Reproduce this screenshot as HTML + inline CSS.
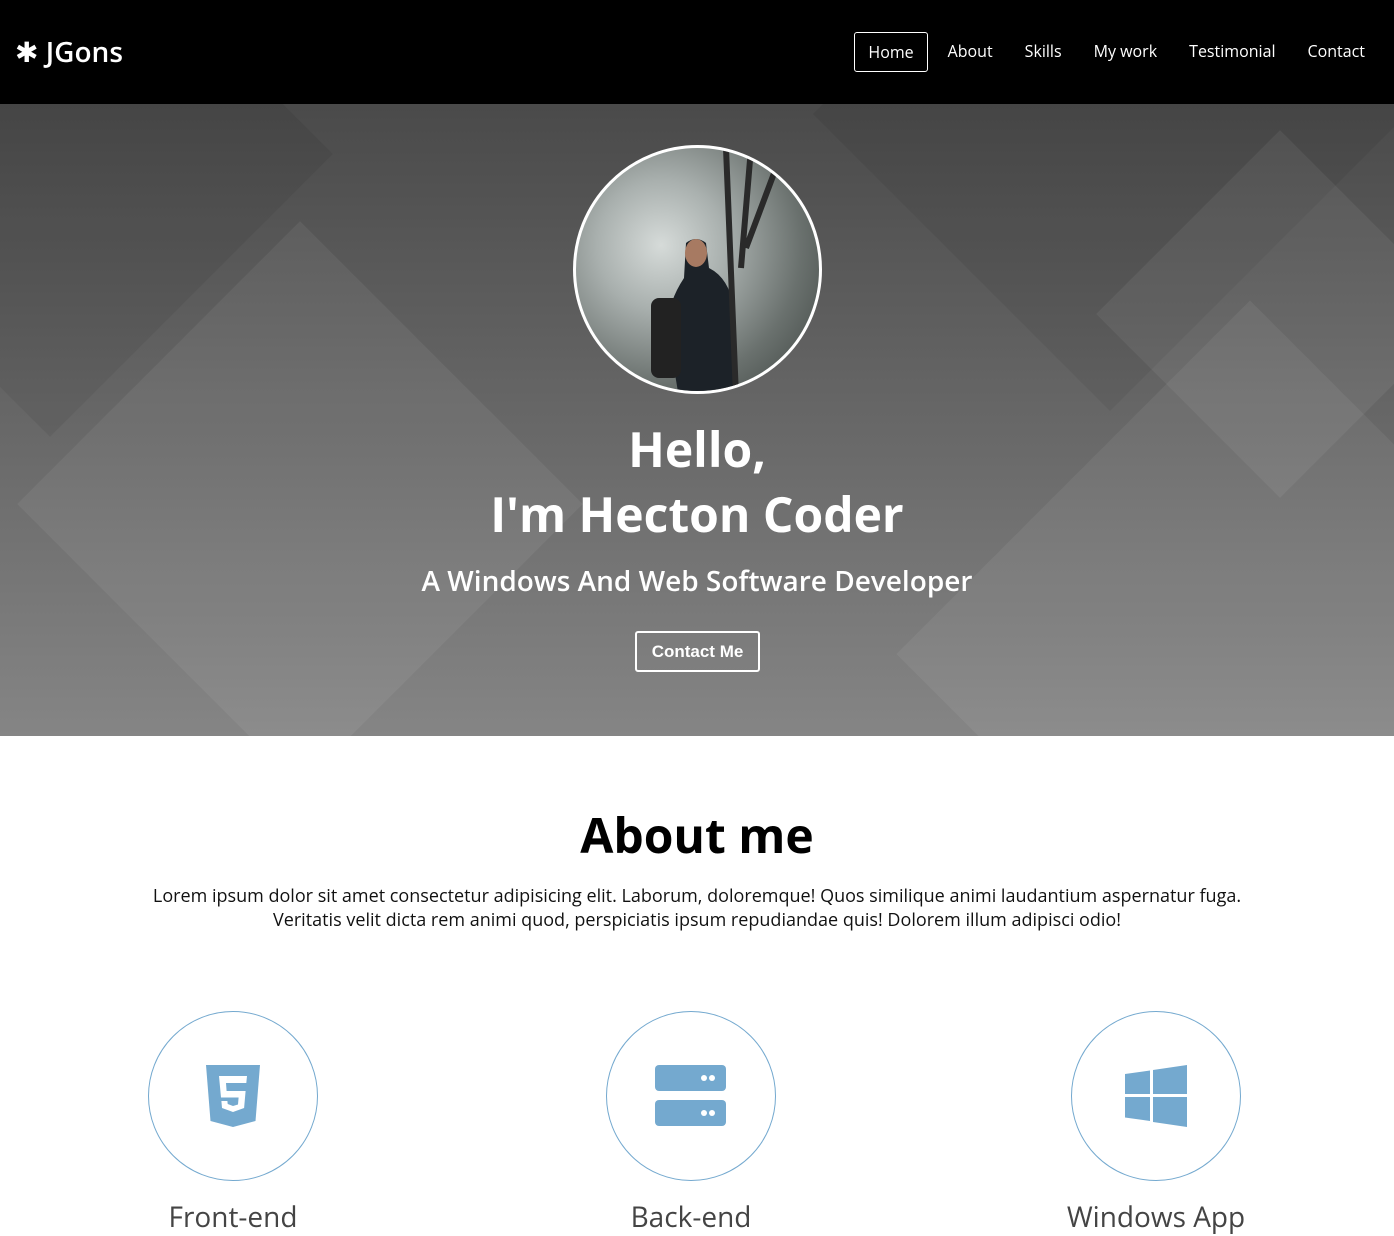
<!DOCTYPE html>
<html><head><meta charset="utf-8"><style>
*{margin:0;padding:0;box-sizing:border-box}
body{width:1394px;height:1227px;overflow:hidden;font-family:"Open Sans","Liberation Sans","DejaVu Sans",sans-serif;background:#fff}
nav{height:104px;background:#000;position:relative;color:#fff}
.logo{position:absolute;left:15px;top:34px;font-size:28px;line-height:36px;font-weight:600}
.links{position:absolute;top:32px;right:13px;display:flex;font-size:16px}
.links a{color:#fff;text-decoration:none;padding:0 16px;height:40px;line-height:38px;display:block}
.links a.act{border:1px solid #fff;border-radius:3px;padding:0 13px;margin-right:4px}
.hero{position:relative;height:632px;background:linear-gradient(180deg,#4a4a4a 0%,#6a6a6a 55%,#858585 100%);overflow:hidden;color:#fff;text-align:center}
.sq{position:absolute;transform:rotate(45deg);background:rgba(255,255,255,.06)}
.sd{position:absolute;transform:rotate(45deg);background:rgba(0,0,0,.06)}
.photo{position:absolute;left:573px;top:41px;width:249px;height:249px;border-radius:50%;border:3px solid #fff;overflow:hidden;background:radial-gradient(circle at 35% 40%,#d6dbd9 0%,#a9b0ae 30%,#6a716e 65%,#3a403d 100%)}
h1{position:absolute;left:0;right:0;font-size:48px;font-weight:bold;line-height:64px}
.sub{position:absolute;left:0;right:0;top:458px;font-size:28px;font-weight:600}
.btn{position:absolute;left:635px;top:527px;width:125px;height:41px;border:2px solid #fff;border-radius:3px;font-family:"Liberation Sans",sans-serif;font-weight:bold;font-size:17px;line-height:37px}
.about{text-align:center}
.about h2{font-size:48px;font-weight:bold;margin-top:72px;line-height:56px;color:#000}
.about p{font-size:18px;line-height:24px;margin-top:20px;color:#111}
.c{position:absolute;top:1011px;width:170px;height:170px;border:1px solid #74a9cf;border-radius:50%;display:flex;align-items:center;justify-content:center}
.t{position:absolute;top:1198px;font-size:28px;color:#444;width:300px;text-align:center}
</style></head><body>
<nav><div class="logo">✱ JGons</div>
<div class="links"><a class="act">Home</a><a>About</a><a>Skills</a><a>My work</a><a>Testimonial</a><a>Contact</a></div></nav>
<div class="hero">
<div class="sq" style="left:1000px;top:300px;width:500px;height:500px"></div>
<div class="sq" style="left:100px;top:200px;width:400px;height:400px"></div>
<div class="sd" style="left:-150px;top:-150px;width:400px;height:400px"></div>
<div class="sd" style="left:900px;top:-200px;width:420px;height:420px"></div>
<div class="sq" style="left:1150px;top:80px;width:260px;height:260px"></div>
<div class="photo"><svg width="249" height="249"><path d="M110 95 q10 -8 20 0 l3 25 q20 10 25 40 l5 90 h-60 l-10-60 q-5-30 15-60z" fill="#1c2228"/><ellipse cx="120" cy="105" rx="11" ry="14" fill="#a77a62"/><rect x="75" y="150" width="30" height="80" rx="8" fill="#222"/><path d="M150 0 l10 249 M175 0 l-10 120 M200 20 l-30 80" stroke="#2a2a2a" stroke-width="6"/></svg></div>
<h1 style="top:314px">Hello,</h1>
<h1 style="top:379px">I'm Hecton Coder</h1>
<div class="sub">A Windows And Web Software Developer</div>
<div class="btn">Contact Me</div>
</div>
<div class="about"><h2>About me</h2>
<p>Lorem ipsum dolor sit amet consectetur adipisicing elit. Laborum, doloremque! Quos similique animi laudantium aspernatur fuga.<br>Veritatis velit dicta rem animi quod, perspiciatis ipsum repudiandae quis! Dolorem illum adipisci odio!</p></div>
<div class="c" style="left:148px"><svg width="54" height="62" viewBox="0 0 54 62"><path d="M0 0h54l-4.5 56L27 62 4.5 56z" fill="#74a9cf"/><path d="M13 11h28l-.7 7H20l.6 8h19l-1.5 17L27 47l-11-4-.6-7h6l.3 3L27 41l5-1.5.6-7H15z" fill="#fff"/></svg></div>
<div class="c" style="left:606px"><svg width="72" height="62"><rect x="0" y="0" width="71" height="26" rx="4" fill="#74a9cf"/><rect x="0" y="35" width="71" height="26" rx="4" fill="#74a9cf"/><circle cx="49" cy="13" r="3" fill="#fff"/><circle cx="57" cy="13" r="3" fill="#fff"/><circle cx="49" cy="48" r="3" fill="#fff"/><circle cx="57" cy="48" r="3" fill="#fff"/></svg></div>
<div class="c" style="left:1071px"><svg width="62" height="62"><path d="M0 9l25-3.5V29H0zM28 5L62 0v29H28zM0 32h25v24L0 52.5zM28 32h34v30l-34-5z" fill="#74a9cf"/></svg></div>
<div class="t" style="left:83px">Front-end</div>
<div class="t" style="left:541px">Back-end</div>
<div class="t" style="left:1006px">Windows App</div>
</body></html>
